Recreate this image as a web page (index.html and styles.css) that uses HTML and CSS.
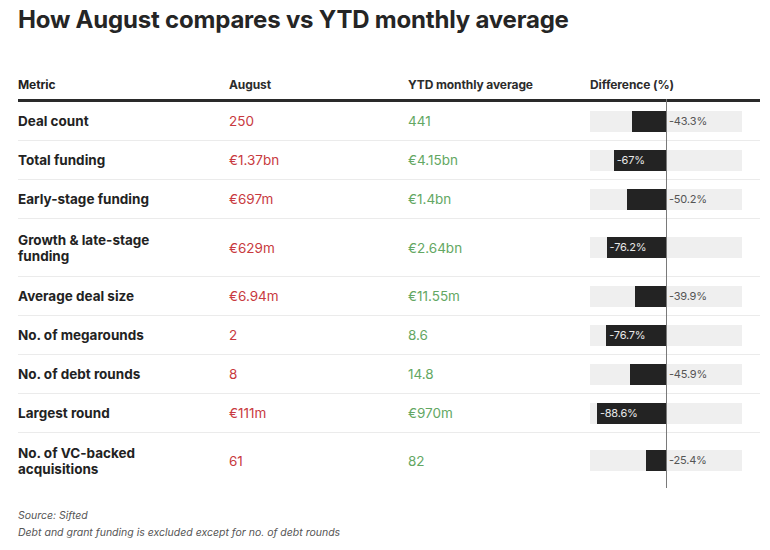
FILE: index.html
```html
<!DOCTYPE html>
<html>
<head>
<meta charset="utf-8">
<link rel="stylesheet" href="styles.css">
</head>
<body>
<div class="page">
  <h1 class="title">How August compares vs YTD monthly average</h1>
  <div class="table">
    <div class="row head">
      <div class="c metric">Metric</div>
      <div class="c">August</div>
      <div class="c">YTD monthly average</div>
      <div class="c">Difference (%)</div>
    </div>
    <div class="body">
      <div class="axis"></div>
      <div class="row">
        <div class="c metric">Deal count</div>
        <div class="c aug">250</div>
        <div class="c ytd">441</div>
        <div class="c diff"><div class="track"><div class="bar" style="width:33.8px"></div><span class="lbl out">-43.3%</span></div></div>
      </div>
      <div class="row">
        <div class="c metric">Total funding</div>
        <div class="c aug">€1.37bn</div>
        <div class="c ytd">€4.15bn</div>
        <div class="c diff"><div class="track"><div class="bar" style="width:52.3px"><span class="lbl in">-67%</span></div></div></div>
      </div>
      <div class="row">
        <div class="c metric">Early-stage funding</div>
        <div class="c aug">€697m</div>
        <div class="c ytd">€1.4bn</div>
        <div class="c diff"><div class="track"><div class="bar" style="width:39.2px"></div><span class="lbl out">-50.2%</span></div></div>
      </div>
      <div class="row tall">
        <div class="c metric">Growth &amp; late-stage<br>funding</div>
        <div class="c aug">€629m</div>
        <div class="c ytd">€2.64bn</div>
        <div class="c diff"><div class="track"><div class="bar" style="width:59.4px"><span class="lbl in">-76.2%</span></div></div></div>
      </div>
      <div class="row">
        <div class="c metric">Average deal size</div>
        <div class="c aug">€6.94m</div>
        <div class="c ytd">€11.55m</div>
        <div class="c diff"><div class="track"><div class="bar" style="width:31.1px"></div><span class="lbl out">-39.9%</span></div></div>
      </div>
      <div class="row">
        <div class="c metric">No. of megarounds</div>
        <div class="c aug">2</div>
        <div class="c ytd">8.6</div>
        <div class="c diff"><div class="track"><div class="bar" style="width:59.8px"><span class="lbl in">-76.7%</span></div></div></div>
      </div>
      <div class="row">
        <div class="c metric">No. of debt rounds</div>
        <div class="c aug">8</div>
        <div class="c ytd">14.8</div>
        <div class="c diff"><div class="track"><div class="bar" style="width:35.8px"></div><span class="lbl out">-45.9%</span></div></div>
      </div>
      <div class="row">
        <div class="c metric">Largest round</div>
        <div class="c aug">€111m</div>
        <div class="c ytd">€970m</div>
        <div class="c diff"><div class="track"><div class="bar" style="width:69.1px"><span class="lbl in">-88.6%</span></div></div></div>
      </div>
      <div class="row tall last">
        <div class="c metric">No. of VC-backed<br>acquisitions</div>
        <div class="c aug">61</div>
        <div class="c ytd">82</div>
        <div class="c diff"><div class="track"><div class="bar" style="width:19.8px"></div><span class="lbl out">-25.4%</span></div></div>
      </div>
    </div>
  </div>
  <div class="notes">
    <p>Source: Sifted</p>
    <p>Debt and grant funding is excluded except for no. of debt rounds</p>
  </div>
</div>
</body>
</html>
```

FILE: styles.css
```css
* { box-sizing: border-box; }
html, body { margin: 0; padding: 0; background: #fff; }
body { font-family: Inter, Roboto, "Liberation Sans", sans-serif; color: #222; }
.page { width: 770px; height: 550px; padding: 6px 10px 0 18px; }
.title {
  margin: 0;
  font-size: 24px;
  line-height: 28px;
  font-weight: 700;
  color: #252525;
  letter-spacing: -0.2px;
}
.table { margin-top: 37px; width: 742px; }
.row {
  display: grid;
  grid-template-columns: 211px 179px 182px 170px;
  align-items: center;
  height: 39px;
  border-bottom: 1px solid #ebebeb;
}
.row.tall { height: 58px; }
.row.last { border-bottom: none; height: 55px; }
.row.head {
  height: 31px;
  align-items: start;
  border-bottom: 3px solid #2a2a2a;
  font-weight: 700;
  color: #2c2c2c;
}
.c { font-size: 13.5px; }
.row.head .c { font-size: 12px; padding-top: 6px; letter-spacing: -0.1px; }
.metric { font-weight: 700; color: #222; line-height: 16px; }
.aug { color: #c83a40; }
.ytd { color: #63a763; }
.body { position: relative; }
.axis {
  position: absolute;
  left: 648px;
  top: -3px;
  bottom: 0;
  width: 1px;
  background: #7a7a7a;
  z-index: 2;
}
.diff { display: flex; align-items: center; height: 100%; }
.track {
  position: relative;
  width: 152px;
  height: 21px;
  background: #efefef;
  display: flex;
  justify-content: flex-end;
  padding-right: 76px;
}
.bar {
  height: 21px;
  background: #232323;
  display: flex;
  align-items: center;
}
.lbl { font-size: 11px; line-height: 21px; letter-spacing: -0.2px; }
.lbl.in { color: #e8e8e8; padding-left: 3px; white-space: nowrap; }
.lbl.out {
  position: absolute;
  left: 79px;
  top: 0;
  color: #555;
}
.notes { margin-top: 19px; }
.notes p {
  margin: 0;
  font-size: 10.5px;
  line-height: 17px;
  font-style: italic;
  color: #555;
}
```
